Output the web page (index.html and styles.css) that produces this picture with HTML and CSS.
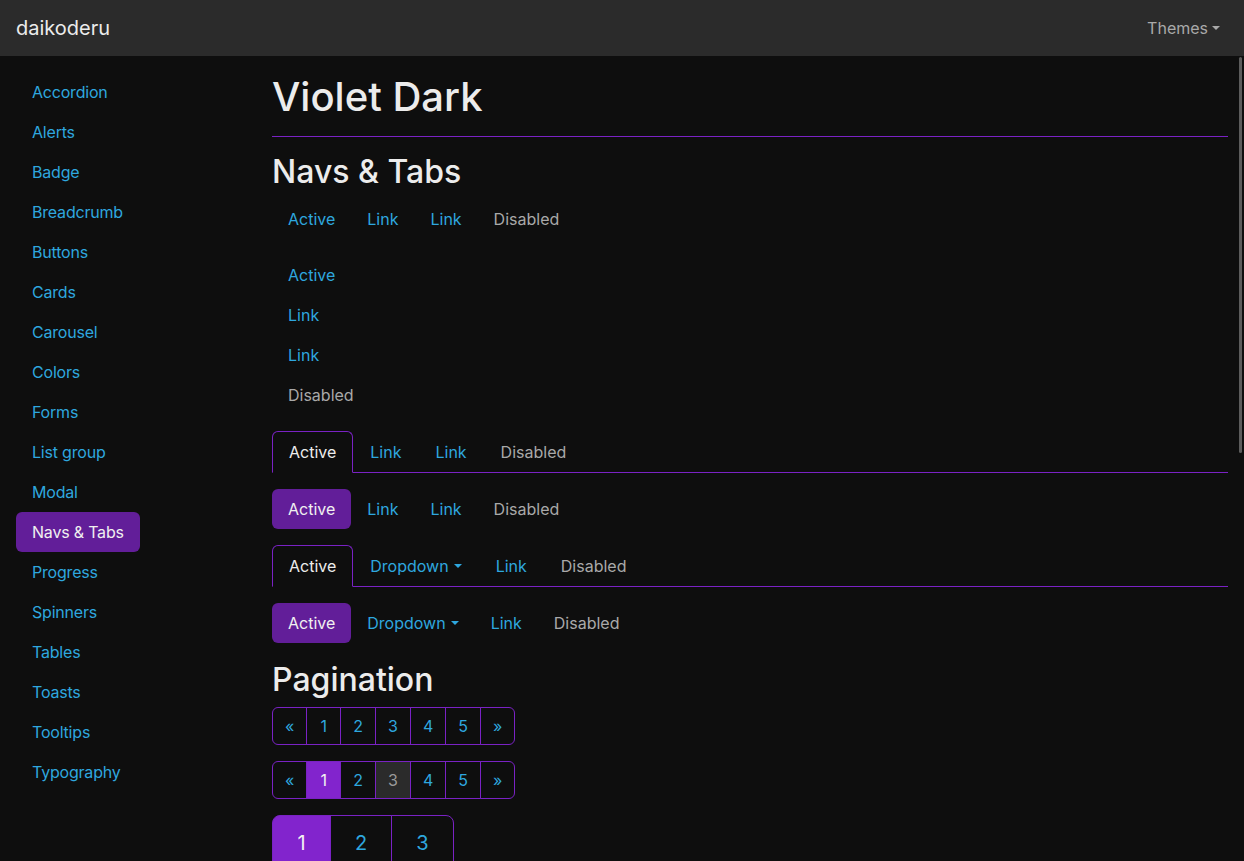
FILE: index.html
```html
<!DOCTYPE html>
<html lang="en">
<head>
<meta charset="utf-8">
<title>Violet Dark</title>
<link rel="stylesheet" href="styles.css">
</head>
<body>
<header class="navbar">
  <a class="brand" href="#">daikoderu</a>
  <a class="themes" href="#">Themes<span class="caret"></span></a>
</header>
<div class="layout">
  <aside class="sidebar">
    <nav class="side-nav">
      <a href="#">Accordion</a>
      <a href="#">Alerts</a>
      <a href="#">Badge</a>
      <a href="#">Breadcrumb</a>
      <a href="#">Buttons</a>
      <a href="#">Cards</a>
      <a href="#">Carousel</a>
      <a href="#">Colors</a>
      <a href="#">Forms</a>
      <a href="#">List group</a>
      <a href="#">Modal</a>
      <a href="#" class="active">Navs &amp; Tabs</a>
      <a href="#">Progress</a>
      <a href="#">Spinners</a>
      <a href="#">Tables</a>
      <a href="#">Toasts</a>
      <a href="#">Tooltips</a>
      <a href="#">Typography</a>
    </nav>
  </aside>
  <main class="content">
    <h1 class="title">Violet Dark</h1>
    <hr class="rule">
    <h2 class="section">Navs &amp; Tabs</h2>

    <nav class="nav mb">
      <a class="nav-link" href="#">Active</a>
      <a class="nav-link" href="#">Link</a>
      <a class="nav-link" href="#">Link</a>
      <span class="nav-link disabled">Disabled</span>
    </nav>

    <nav class="nav nav-col mb">
      <a class="nav-link" href="#">Active</a>
      <a class="nav-link" href="#">Link</a>
      <a class="nav-link" href="#">Link</a>
      <span class="nav-link disabled">Disabled</span>
    </nav>

    <nav class="nav tabs mb">
      <a class="nav-link active" href="#">Active</a>
      <a class="nav-link" href="#">Link</a>
      <a class="nav-link" href="#">Link</a>
      <span class="nav-link disabled">Disabled</span>
    </nav>

    <nav class="nav pills mb">
      <a class="nav-link active" href="#">Active</a>
      <a class="nav-link" href="#">Link</a>
      <a class="nav-link" href="#">Link</a>
      <span class="nav-link disabled">Disabled</span>
    </nav>

    <nav class="nav tabs mb">
      <a class="nav-link active" href="#">Active</a>
      <a class="nav-link" href="#">Dropdown<span class="caret"></span></a>
      <a class="nav-link" href="#">Link</a>
      <span class="nav-link disabled">Disabled</span>
    </nav>

    <nav class="nav pills mb-s">
      <a class="nav-link active" href="#">Active</a>
      <a class="nav-link" href="#">Dropdown<span class="caret"></span></a>
      <a class="nav-link" href="#">Link</a>
      <span class="nav-link disabled">Disabled</span>
    </nav>

    <h2 class="section">Pagination</h2>
    <ul class="pagination mb">
      <li><a href="#">&laquo;</a></li>
      <li><a href="#">1</a></li>
      <li><a href="#">2</a></li>
      <li><a href="#">3</a></li>
      <li><a href="#">4</a></li>
      <li><a href="#">5</a></li>
      <li><a href="#">&raquo;</a></li>
    </ul>
    <ul class="pagination mb">
      <li><a href="#">&laquo;</a></li>
      <li class="active"><a href="#">1</a></li>
      <li><a href="#">2</a></li>
      <li class="disabled"><span>3</span></li>
      <li><a href="#">4</a></li>
      <li><a href="#">5</a></li>
      <li><a href="#">&raquo;</a></li>
    </ul>
    <ul class="pagination pagination-lg mb">
      <li class="active"><a href="#">1</a></li>
      <li><a href="#">2</a></li>
      <li><a href="#">3</a></li>
    </ul>
  </main>
  <div class="scroll-thumb"></div>
</div>
</body>
</html>
```

FILE: styles.css
```css
* { box-sizing: border-box; }
html, body {
  margin: 0;
  height: 100%;
}
body {
  background: #0e0e0e;
  color: #ececec;
  font-family: Inter, "Liberation Sans", sans-serif;
  font-size: 16px;
  line-height: 24px;
  overflow: hidden;
  display: flex;
  flex-direction: column;
}
a { text-decoration: none; color: #2ea7df; }

.navbar {
  height: 56px;
  flex: none;
  background: #2b2b2b;
  display: flex;
  align-items: center;
  justify-content: space-between;
  padding: 0 24px 0 16px;
}
.brand {
  color: #ececec;
  font-size: 20px;
  line-height: 30px;
}
.themes {
  color: #a9a9a9;
  display: flex;
  align-items: center;
}
.caret {
  display: inline-block;
  width: 0;
  height: 0;
  margin-left: 4px;
  border-left: 4px solid transparent;
  border-right: 4px solid transparent;
  border-top: 4px solid currentColor;
  vertical-align: 3px;
}

.layout {
  flex: 1;
  display: flex;
  position: relative;
  min-height: 0;
}
.sidebar {
  width: 256px;
  flex: none;
  padding: 16px;
}
.side-nav {
  display: flex;
  flex-direction: column;
  align-items: flex-start;
}
.side-nav a {
  padding: 8px 16px;
  border-radius: 6px;
  color: #2ea7df;
  letter-spacing: -0.2px;
}
.side-nav a.active {
  background: #621e99;
  color: #f0f0f0;
}

.content {
  flex: 1;
  padding: 16px 16px 0 16px;
  overflow: hidden;
}
.title {
  margin: 0;
  font-size: 40px;
  line-height: 48px;
  font-weight: 500;
  padding-top: 1px;
}
.rule {
  border: 0;
  border-top: 1px solid #7a22c4;
  margin: 15px 0 16px;
  opacity: 1;
}
.section {
  margin: 0 0 8px;
  font-size: 32px;
  line-height: 38px;
  font-weight: 500;
}

.mb { margin-bottom: 16px; }
.mb-s { margin-bottom: 18px; }

.nav {
  display: flex;
  list-style: none;
  margin-top: 0;
  padding: 0;
}
.nav-col { flex-direction: column; align-items: flex-start; }
.nav-link {
  display: flex;
  align-items: center;
  padding: 8px 16px;
  color: #2ea7df;
}
.nav-link .caret { margin-left: 5px; }
.nav-link.disabled { color: #a9a9a9; }

.tabs {
  border-bottom: 1px solid #7a22c4;
}
.tabs .nav-link {
  border: 1px solid transparent;
  border-top-left-radius: 6px;
  border-top-right-radius: 6px;
  margin-bottom: -1px;
}
.tabs .nav-link.active {
  color: #ececec;
  background: #0e0e0e;
  border-color: #7a22c4 #7a22c4 #0e0e0e;
}
.pills .nav-link { border-radius: 6px; }
.pills .nav-link.active {
  background: #621e99;
  color: #f0f0f0;
}

.pagination {
  display: flex;
  list-style: none;
  padding: 0;
  margin-top: 0;
}
.pagination li a,
.pagination li span {
  display: block;
  padding: 6px 12px;
  min-width: 35px;
  text-align: center;
  border: 1px solid #7a22c4;
  margin-left: -1px;
  color: #2ea7df;
  background: #0e0e0e;
}
.pagination li:first-child a {
  margin-left: 0;
  border-top-left-radius: 6px;
  border-bottom-left-radius: 6px;
}
.pagination li:last-child a {
  border-top-right-radius: 6px;
  border-bottom-right-radius: 6px;
}
.pagination li.active a {
  background: #8224cd;
  color: #f2f2f2;
}
.pagination li.disabled span {
  background: #2b2b2b;
  color: #9a9a9a;
}
.pagination-lg li a {
  padding: 12px 24px;
  font-size: 20px;
  line-height: 30px;
  min-width: 59px;
}
.pagination-lg li:first-child a {
  border-top-left-radius: 8px;
  border-bottom-left-radius: 8px;
}
.pagination-lg li:last-child a {
  border-top-right-radius: 8px;
  border-bottom-right-radius: 8px;
}

.scroll-thumb {
  position: absolute;
  right: 2px;
  top: 1px;
  width: 3px;
  height: 396px;
  background: #5c5c5c;
  border-radius: 2px;
}
```
